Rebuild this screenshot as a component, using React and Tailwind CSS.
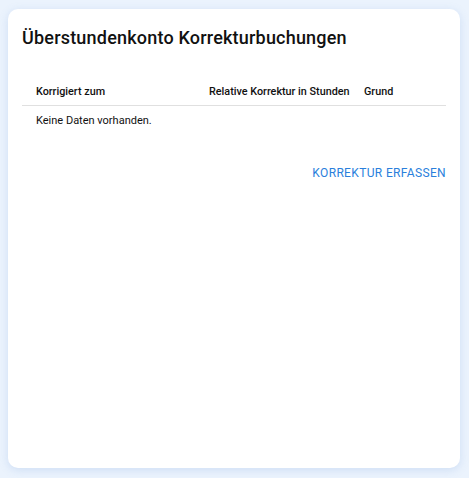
export default function App() {
  return (
    <div className="min-h-[478px] bg-[#ebf3fd] p-2 pr-[9px] pb-[10px] pt-[9px]" style={{ fontFamily: "Roboto, 'Noto Sans', sans-serif" }}>
      <div className="h-[459px] rounded-[10px] bg-white px-[14px] pt-[17px] shadow-[0_2px_8px_rgba(120,160,220,0.25)]">
        <h1 className="text-[18px] leading-[24px] font-medium tracking-[0.2px] text-[#111]">Überstundenkonto Korrekturbuchungen</h1>
        <table className="mt-[34px] w-full border-collapse text-[11px] leading-[16px] text-[#111]">
          <thead>
            <tr className="border-b border-[#e0e0e0]">
              <th className="w-[173px] whitespace-nowrap pl-[14px] pb-[5px] text-left text-[10.8px] font-medium">Korrigiert zum</th>
              <th className="w-[155px] whitespace-nowrap pl-[14px] pb-[5px] text-left text-[10.8px] font-medium">Relative Korrektur in Stunden</th>
              <th className="whitespace-nowrap pl-[14px] pb-[5px] text-left text-[10.8px] font-medium">Grund</th>
            </tr>
          </thead>
          <tbody>
            <tr>
              <td colSpan={3} className="pl-[14px] pt-[7px] text-left font-normal">Keine Daten vorhanden.</td>
            </tr>
          </tbody>
        </table>
        <div className="mt-[36px] flex justify-end">
          <button className="text-[12px] leading-[16px] uppercase tracking-[0.35px] text-[#2a7fdc] font-normal">Korrektur erfassen</button>
        </div>
      </div>
    </div>
  );
}
